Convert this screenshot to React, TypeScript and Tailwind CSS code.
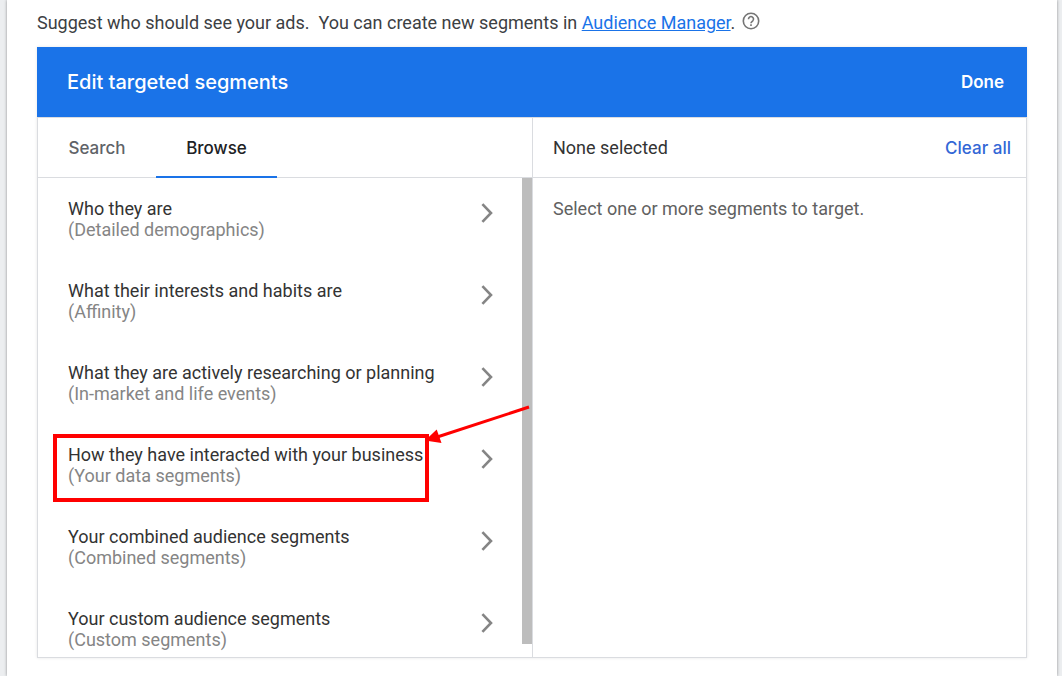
import React from "react";

const segments = [
  { title: "Who they are", note: "(Detailed demographics)" },
  { title: "What their interests and habits are", note: "(Affinity)" },
  { title: "What they are actively researching or planning", note: "(In-market and life events)" },
  { title: "How they have interacted with your business", note: "(Your data segments)", marked: true },
  { title: "Your combined audience segments", note: "(Combined segments)" },
  { title: "Your custom audience segments", note: "(Custom segments)" },
];

const display = "font-['Inter','Open_Sans',sans-serif]";

function Chevron() {
  return (
    <svg aria-hidden="true" className="h-5 w-3 shrink-0" viewBox="0 0 12 20" fill="none" stroke="#858585" strokeWidth="2.6">
      <path d="M1.4 1.2 L10 10 L1.4 18.8" />
    </svg>
  );
}

function HelpIcon() {
  return (
    <svg aria-hidden="true" className="size-[18px]" viewBox="0 0 18 18" fill="none" stroke="#757575" strokeWidth="1.6">
      <circle cx="9" cy="9" r="7.7" />
      <path d="M6.5 7.2a2.5 2.5 0 1 1 4.3 1.6C9.9 9.6 9 9.9 9 11.3" />
      <path d="M9 12.3v1.8" />
    </svg>
  );
}

function Callout() {
  return (
    <>
      <div className="pointer-events-none absolute top-2.5 right-[93px] bottom-1 left-[15px] border-4 border-[#ff0000]" />
      <svg aria-hidden="true" className="pointer-events-none absolute -top-[21px] -right-2 h-[42px] w-[106px]" viewBox="0 0 106 42">
        <path d="M105 4 L14 33.8" stroke="#ff0000" strokeWidth="3" />
        <path d="M1 37.5 L12.7 26.5 L17.5 40 Z" fill="#ff0000" />
      </svg>
    </>
  );
}

export default function App() {
  return (
    <div className="min-h-screen bg-[#eceef0] pr-[5px] pl-[7px] font-['Roboto',sans-serif] text-lg leading-[21px]">
      <main className="min-h-screen bg-white px-[30px] pt-3 pb-[18px] shadow-[0_0_3px_rgba(0,0,0,0.4)]">
        <div className="flex h-[35px] items-start whitespace-pre text-[#3c4043]">
          <p>
            Suggest who should see your ads.{"  "}You can create new segments in{" "}
            <a href="#audience-manager" className="text-[#1a73e8] underline">Audience Manager</a>.
          </p>
          <button type="button" aria-label="Help" className="ml-[7px]">
            <HelpIcon />
          </button>
        </div>

        <section className="shadow-[0_0_3px_rgba(0,0,0,0.1)]">
          <header className={`${display} flex h-[70px] items-center justify-between bg-[#1a73e8] pr-[23px] pl-[30px] text-white`}>
            <h1 className="text-xl leading-[21px] font-medium">Edit targeted segments</h1>
            <button type="button" className="text-[17px] font-semibold">Done</button>
          </header>

          <div className="grid grid-cols-2 border border-[#dadce0]">
            <div className="min-w-0">
              <div role="tablist" className={`${display} flex h-[60px] border-b border-[#dadce0] text-[17px] font-medium`}>
                <button type="button" role="tab" aria-selected="false" className="w-[118px] pt-0.5 text-[#5f6368]">Search</button>
                <button type="button" role="tab" aria-selected="true" className="-mb-px w-[121px] border-b-2 border-[#1a73e8] pt-0.5 text-[#202124]">Browse</button>
              </div>
              <div className="flex h-[479px]">
                <ul className="min-w-0 grow">
                  {segments.map((s) => (
                    <li key={s.title} className="relative">
                      <button type="button" className="flex h-[82px] w-full items-start justify-between pt-5 pr-[29px] pl-[30px] text-left">
                        <span>
                          <span className="block text-[#333333]">{s.title}</span>
                          <span className="block text-[#858585]">{s.note}</span>
                        </span>
                        <span className="pt-[5px]"><Chevron /></span>
                      </button>
                      {s.marked && <Callout />}
                    </li>
                  ))}
                </ul>
                <div className="mb-[13px] w-2.5 shrink-0 bg-[#bdbdbd]" />
              </div>
            </div>

            <div className="min-w-0 border-l border-[#dadce0]">
              <div className="flex h-[60px] items-center justify-between border-b border-[#dadce0] pr-[15px] pl-5">
                <h2 className="text-[#333333]">None selected</h2>
                <button type="button" className={`${display} pt-0.5 text-[17px] font-medium text-[#3367d6]`}>Clear all</button>
              </div>
              <p className="px-5 pt-5 text-[#616161]">Select one or more segments to target.</p>
            </div>
          </div>
        </section>
      </main>
    </div>
  );
}
